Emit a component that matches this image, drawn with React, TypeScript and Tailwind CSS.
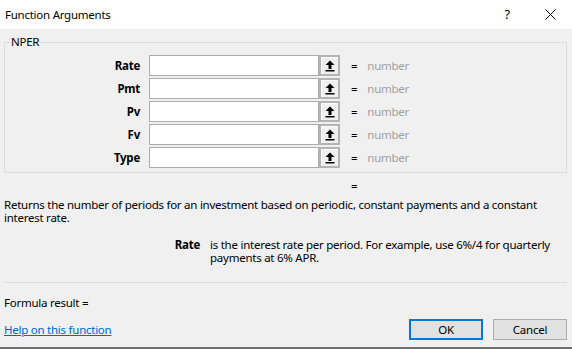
import React from "react";

const args = ["Rate", "Pmt", "Pv", "Fv", "Type"];

function RefButton() {
  return (
    <div className="flex h-[21px] w-[21px] items-center justify-center border-2 border-[#b4b4b4] bg-[#f0f0f0] shadow-[inset_1px_1px_0_#ffffff]">
      <svg width="10" height="12" viewBox="0 0 10 12">
        <path d="M5 0.5 L9.5 5 H6.5 V9 H3.5 V5 H0.5 Z" fill="#000" />
        <rect x="0.5" y="10" width="9" height="1.5" fill="#000" />
      </svg>
    </div>
  );
}

function ArgRow({ name }: { name: string }) {
  return (
    <div className="flex h-[21px] items-center">
      <span className="w-[135px] text-right font-bold">{name}</span>
      <input
        type="text"
        className="ml-[9px] h-[21px] w-[170px] border border-[#acacac] bg-white px-1 outline-none"
      />
      <RefButton />
      <span className="ml-[11px]">=</span>
      <span className="ml-[10px] text-[#a0a0a0]">number</span>
    </div>
  );
}

export default function App() {
  return (
    <div
      className="flex h-[349px] w-[572px] flex-col overflow-hidden border-b-2 border-[#707070] bg-[#f0f0f0] text-[11.5px] leading-[13px] tracking-[-0.25px] text-black"
      style={{ fontFamily: '"Noto Sans", "Open Sans", sans-serif' }}
    >
      <div className="flex h-[29px] shrink-0 items-center bg-white pl-[5px]">
        <span className="flex-1">Function Arguments</span>
        <span className="mr-[35px] text-[13px]">?</span>
        <svg width="11" height="11" viewBox="0 0 11 11" className="mr-[16px]">
          <path d="M0.5 0.5 L10.5 10.5 M10.5 0.5 L0.5 10.5" stroke="#000" strokeWidth="1" />
        </svg>
      </div>

      <div className="flex flex-1 flex-col pl-[4px] pr-[5px]">
        <fieldset className="mt-[6px] border border-[#dcdcdc] pb-[4px]">
          <legend className="ml-[5px] px-[1px] leading-[14px]">NPER</legend>
          <div className="mt-[6px] flex flex-col gap-[2px]">
            {args.map((a) => (
              <ArgRow key={a} name={a} />
            ))}
          </div>
        </fieldset>

        <div className="ml-[347px] mt-[6px]">=</div>

        <p className="mt-[6px] whitespace-nowrap">
          Returns the number of periods for an investment based on periodic, constant payments and a constant
          <br />
          interest rate.
        </p>

        <div className="mt-[14px] flex">
          <span className="w-[196px] text-right font-bold">Rate</span>
          <p className="ml-[10px] whitespace-nowrap">
            is the interest rate per period. For example, use 6%/4 for quarterly
            <br />
            payments at 6% APR.
          </p>
        </div>

        <div className="mt-[18px] h-px bg-[#dcdcdc]" />

        <div className="mt-[13px]">Formula result =</div>

        <div className="mt-[10px] flex items-center">
          <a href="#" className="flex-1 text-[#0066cc] underline">
            Help on this function
          </a>
          <button className="h-[21px] w-[74px] border-2 border-[#0078d7] bg-[#e1e1e1]">OK</button>
          <button className="ml-[10px] h-[21px] w-[74px] border border-[#adadad] bg-[#e1e1e1]">Cancel</button>
        </div>
      </div>
    </div>
  );
}
